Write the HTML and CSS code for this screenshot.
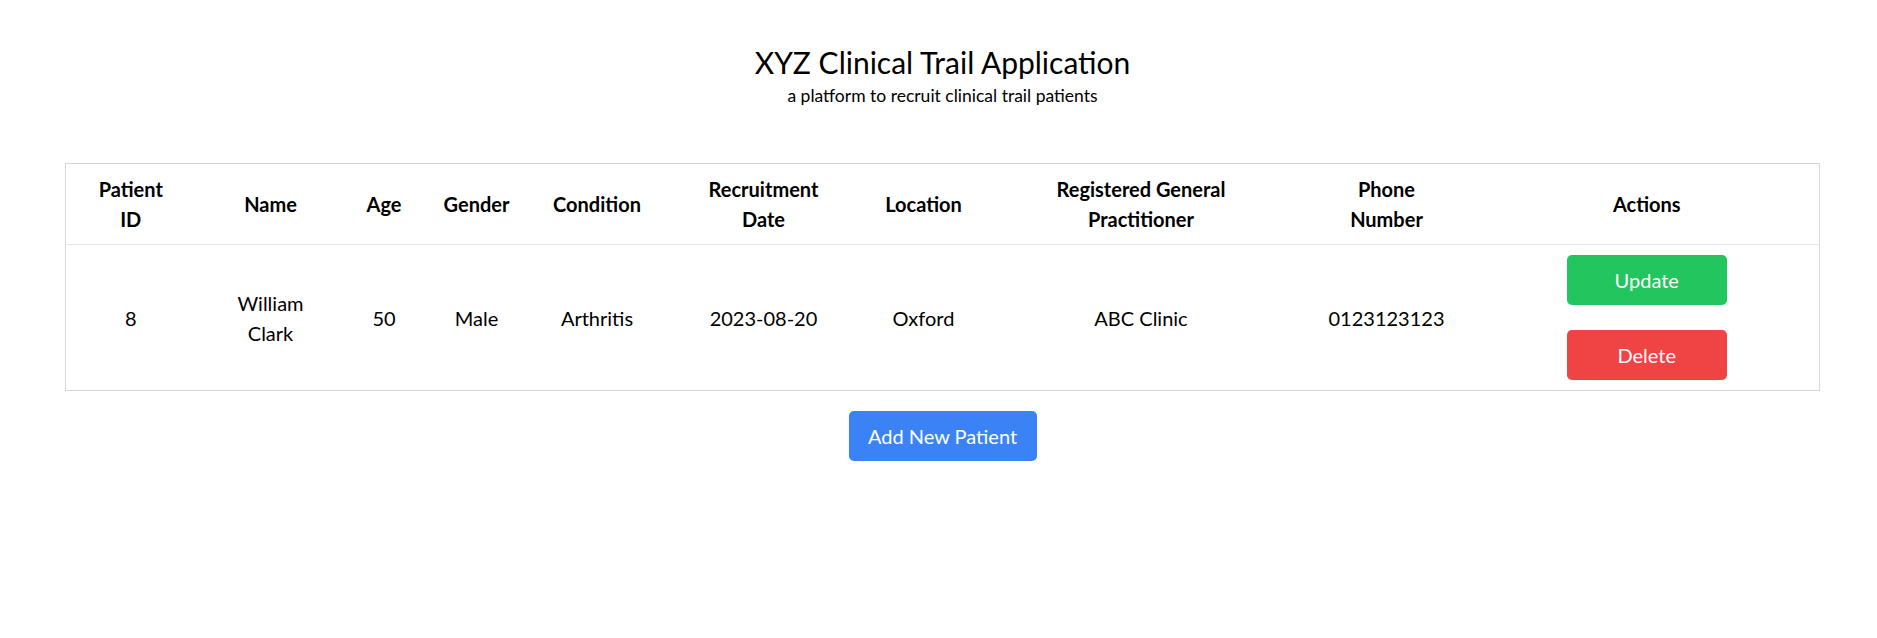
FILE: index.html
```html
<!DOCTYPE html>
<html lang="en">
<head>
<meta charset="utf-8">
<title>XYZ Clinical Trail Application</title>
<link rel="stylesheet" href="styles.css">
</head>
<body>
<div class="page">
  <header class="hero">
    <h1 class="title">XYZ Clinical Trail Application</h1>
    <p class="subtitle">a platform to recruit clinical trail patients</p>
  </header>
  <table class="patients">
    <colgroup>
      <col class="c-id">
      <col class="c-name">
      <col class="c-age">
      <col class="c-gender">
      <col class="c-cond">
      <col class="c-date">
      <col class="c-loc">
      <col class="c-gp">
      <col class="c-phone">
      <col class="c-actions">
    </colgroup>
    <thead>
      <tr>
        <th>Patient<br>ID</th>
        <th>Name</th>
        <th>Age</th>
        <th>Gender</th>
        <th>Condition</th>
        <th>Recruitment<br>Date</th>
        <th>Location</th>
        <th>Registered General<br>Practitioner</th>
        <th>Phone<br>Number</th>
        <th>Actions</th>
      </tr>
    </thead>
    <tbody>
      <tr>
        <td>8</td>
        <td>William<br>Clark</td>
        <td>50</td>
        <td>Male</td>
        <td>Arthritis</td>
        <td>2023-08-20</td>
        <td>Oxford</td>
        <td>ABC Clinic</td>
        <td>0123123123</td>
        <td>
          <div class="actions">
            <button class="btn btn-update">Update</button>
            <button class="btn btn-delete">Delete</button>
          </div>
        </td>
      </tr>
    </tbody>
  </table>
  <div class="add-row">
    <button class="btn btn-add">Add New Patient</button>
  </div>
</div>
</body>
</html>
```
FILE: styles.css
```css
* { box-sizing: border-box; }

html, body {
  margin: 0;
  padding: 0;
  background: #ffffff;
}

body {
  font-family: Lato, "Open Sans", "Noto Sans", sans-serif;
  font-size: 20px;
  line-height: 30px;
  color: #000000;
}

.page {
  padding: 42px 57px 0 65px;
}

.hero {
  text-align: center;
  margin-bottom: 55px;
}

.title {
  margin: 0;
  font-size: 30px;
  line-height: 40px;
  font-weight: 400;
}

.subtitle {
  margin: 1px 0 0;
  font-size: 17.5px;
  line-height: 25px;
}

.patients {
  width: 100%;
  table-layout: fixed;
  border-collapse: collapse;
  border: 1px solid #d4d6da;
}

.c-id { width: 130px; }
.c-name { width: 150px; }
.c-age { width: 77px; }
.c-gender { width: 108px; }
.c-cond { width: 133px; }
.c-date { width: 200px; }
.c-loc { width: 120px; }
.c-gp { width: 315px; }
.c-phone { width: 176px; }
.c-actions { width: auto; }

.patients th,
.patients td {
  padding: 10px 20px;
  text-align: center;
  vertical-align: middle;
}

.patients th {
  font-weight: 700;
}

.patients thead tr {
  border-bottom: 1px solid #e5e7eb;
}

.actions {
  display: flex;
  flex-direction: column;
  align-items: center;
  gap: 25px;
}

.btn {
  font-family: inherit;
  font-size: 20px;
  line-height: 30px;
  color: #ffffff;
  border: 0;
  border-radius: 5px;
  padding: 10px 20px;
  white-space: nowrap;
  cursor: pointer;
}

.btn-update { width: 160px; background: #22c55e; }
.btn-delete { width: 160px; background: #ef4444; }

.add-row {
  display: flex;
  justify-content: center;
  margin-top: 20px;
}

.btn-add {
  width: 188px;
  padding: 10px 0;
  background: #3b82f6;
}
```
